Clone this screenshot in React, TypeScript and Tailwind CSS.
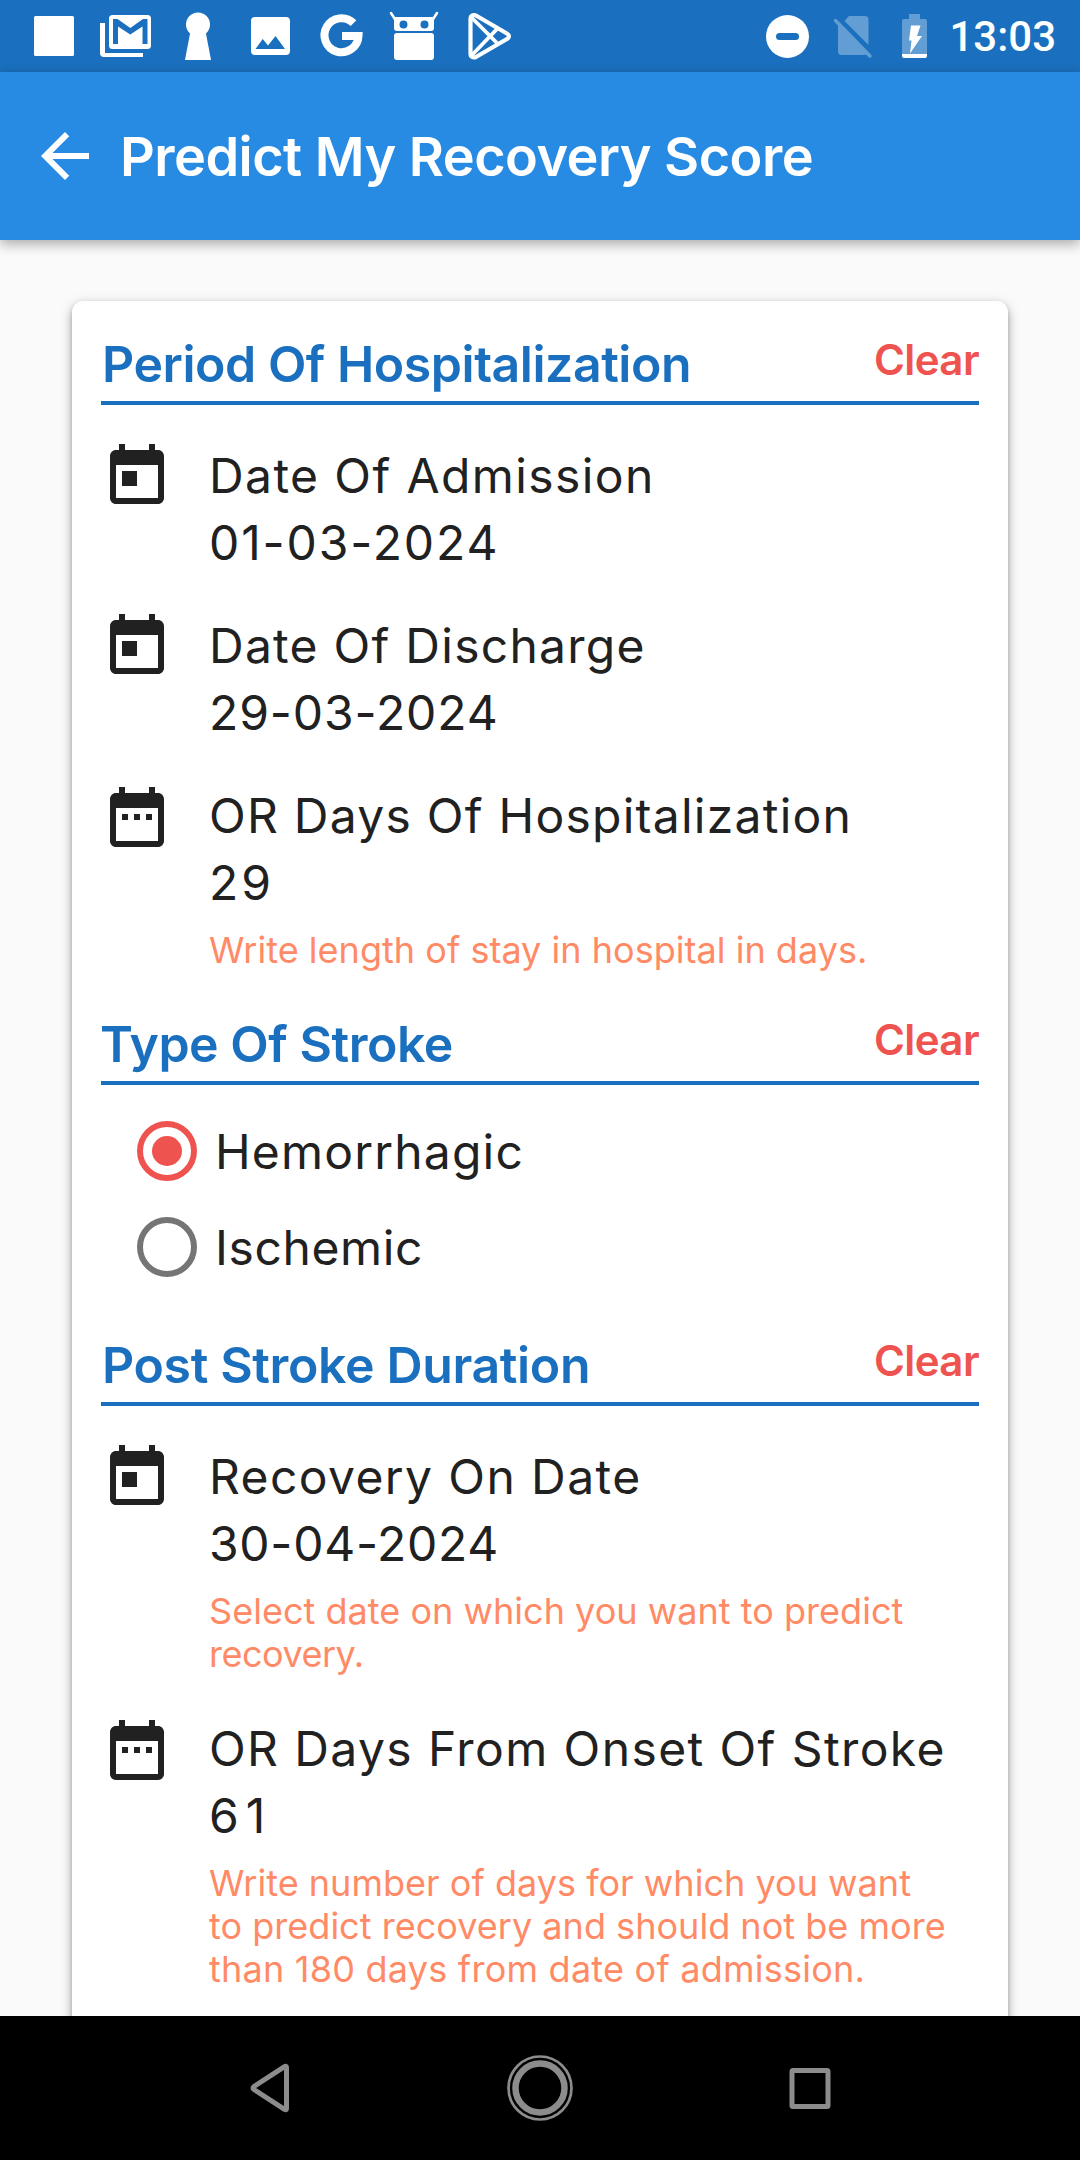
import type { ReactNode } from "react";

const TODAY =
  "M19 3h-1V1h-2v2H8V1H6v2H5c-1.11 0-1.99.9-1.99 2L3 19c0 1.1.89 2 2 2h14c1.1 0 2-.9 2-2V5c0-1.1-.9-2-2-2zm0 16H5V8h14v11zM7 10h5v5H7z";
const RANGE =
  "M9 11H7v2h2v-2zm4 0h-2v2h2v-2zm4 0h-2v2h2v-2zm2-7h-1V2h-2v2H8V2H6v2H5c-1.11 0-1.99.9-1.99 2L3 20c0 1.1.89 2 2 2h14c1.1 0 2-.9 2-2V6c0-1.1-.9-2-2-2zm0 16H5V9h14v11z";

function StatusBar() {
  return (
    <div className="flex h-[72px] shrink-0 items-center justify-between bg-[#1a70be] pl-[18px] text-white">
      <div className="flex">
        <svg className="h-[72px] w-[72px]" viewBox="18 0 72 72" fill="currentColor">
          <rect x="34" y="16" width="40" height="40" rx="1.5" />
        </svg>
        <svg className="h-[72px] w-[72px]" viewBox="90 0 72 72" fill="currentColor">
          <path d="M100 23h5v30h38v4h-39q-4 0-4-4z" />
          <path
            fillRule="evenodd"
            d="M112.500 15h35q3.500 0 3.500 3.500v27q0 3.500-3.500 3.500h-35q-3.500 0-3.500-3.500v-27q0-3.500 3.500-3.500zM113 19v25h5V26.500l12.300 8 12.200-8V44h5V19h-4.500l-12.700 9-12.800-9z"
          />
        </svg>
        <svg className="h-[72px] w-[72px]" viewBox="162 0 72 72" fill="currentColor">
          <circle cx="198" cy="24.500" r="12" />
          <path d="M190.500 31h15l5.500 29h-26z" />
        </svg>
        <svg className="h-[72px] w-[72px]" viewBox="234 0 72 72" fill="currentColor">
          <path
            fillRule="evenodd"
            d="M255 17h31q4 0 4 4v30q0 4-4 4h-31q-4 0-4-4V21q0-4 4-4zM255.500 49h29.500l-9.500-13-7.500 9.500-5.300-6.500z"
          />
        </svg>
        <svg className="h-[72px] w-[72px]" viewBox="306 0 72 72" fill="none" stroke="currentColor" strokeWidth="8">
          <path d="M353.500 23.200A17 17 0 1 0 358.500 36H342" />
        </svg>
        <svg className="h-[72px] w-[72px]" viewBox="378 0 72 72" fill="currentColor">
          <path
            fillRule="evenodd"
            d="M394 17h40v11q0 3-3 3h-34q-3 0-3-3zM403.500 20.500a4 4 0 1 0 0 8 4 4 0 0 0 0-8zM424.500 20.500a4 4 0 1 0 0 8 4 4 0 0 0 0-8z"
          />
          <path d="M391 13l4.500 7M437 13l-4.500 7" stroke="currentColor" strokeWidth="2.500" strokeLinecap="round" />
          <rect x="394" y="33" width="40" height="27" rx="3" />
        </svg>
        <svg
          className="h-[72px] w-[72px]"
          viewBox="450 0 72 72"
          fill="none"
          stroke="currentColor"
          strokeWidth="4.200"
          strokeLinejoin="round"
        >
          <path d="M470.500 18.500q0-4 5-3.200l31 18q5 3 0 6l-31 18q-5 .5-5-3z" />
          <path d="M471.500 17.500L498 44M471.500 55.500L498 28" strokeWidth="3.800" />
        </svg>
      </div>
      <div className="flex items-center pr-[24px]">
        <svg className="h-[72px] w-[72px]" viewBox="750 0 72 72">
          <circle cx="786.500" cy="36.500" r="21.500" fill="white" />
          <rect x="775" y="33" width="23" height="7" rx="3.500" fill="#1a70be" />
        </svg>
        <svg className="h-[72px] w-[60px]" viewBox="822 0 60 72">
          <path
            d="M848 16h16q3.500 0 3.500 3.500V45L843.500 21zM837 24.500L866 54q-1 1-3 1h-22.500q-3.500 0-3.500-3.500z"
            fill="#629dd4"
          />
          <path d="M834.500 20.500L869 56" stroke="#629dd4" strokeWidth="3.500" strokeLinecap="round" />
        </svg>
        <svg className="h-[72px] w-[60px]" viewBox="882 0 60 72">
          <path d="M908 14h11v5h5q2 0 2 2v33h-25V21q0-2 2-2h5z" fill="#629dd4" />
          <path d="M901 54h25v2q0 2-2 2h-21q-2 0-2-2z" fill="white" />
          <path d="M910 25.500h9.500l-3.500 10.500h5l-12 17.500 1.500-13h-2.500z" fill="white" />
        </svg>
        <span className="pl-[6px] pt-[2px] font-['Roboto'] text-[42px] font-medium leading-[70px]">13:03</span>
      </div>
    </div>
  );
}

function SectionHeader({ children }: { children: ReactNode }) {
  return (
    <div className="flex items-start justify-between border-b-4 border-[#1a70be] pb-[7px] leading-[60px]">
      <h2 className="pl-px text-[50px] font-semibold tracking-[-0.46px] text-[#1a70be]">{children}</h2>
      <button className="-mt-[4px] text-[42px] font-semibold leading-[60px] tracking-[-0.58px] text-[#ef5350]">
        Clear
      </button>
    </div>
  );
}

function Field({ icon, label, value, hint }: { icon: string; label: ReactNode; value: ReactNode; hint?: ReactNode }) {
  return (
    <div className="flex gap-[36px]">
      <svg className="-mt-px h-[72px] w-[72px] shrink-0 fill-[#212121]" viewBox="0 0 24 24">
        <path d={icon} />
      </svg>
      <div className="whitespace-nowrap text-[48px] leading-[67px] text-[#212121]">
        <div className="tracking-[1.4px]">{label}</div>
        <div>{value}</div>
        {hint && (
          <div className="-mb-[2px] mt-[13px] text-[36px] leading-[43px] tracking-[0.03px] text-[#ff8a65]">{hint}</div>
        )}
      </div>
    </div>
  );
}

function Radio({ checked, children }: { checked?: boolean; children: ReactNode }) {
  return (
    <div className="flex h-[96px] items-center gap-[18px] pl-[36px] text-[48px] text-[#212121]">
      <span
        className={
          checked
            ? "flex h-[60px] w-[60px] items-center justify-center rounded-full border-[6px] border-[#ef5350]"
            : "h-[60px] w-[60px] rounded-full border-[6px] border-[#757575]"
        }
      >
        {checked && <span className="h-[30px] w-[30px] rounded-full bg-[#ef5350]" />}
      </span>
      <span className="pt-[2px]">{children}</span>
    </div>
  );
}

export default function App() {
  return (
    <div className="flex h-[2160px] w-[1080px] flex-col overflow-hidden bg-[#fafafa] font-['Inter',sans-serif] [font-feature-settings:'calt'_0]">
      <StatusBar />
      <header className="z-10 flex h-[168px] shrink-0 items-center bg-[#278ae3] pl-[29px] text-white shadow-[0_4px_12px_rgba(0,0,0,0.33)]">
        <svg className="h-[72px] w-[72px] fill-current" viewBox="0 0 24 24">
          <path d="M20 11H7.83l5.590-5.590L12 4l-8 8 8 8 1.410-1.410L7.830 13H20v-2z" />
        </svg>
        <h1 className="pl-[19px] pt-[2px] text-[54px] font-semibold leading-[72px] tracking-[-0.53px]">
          Predict My Recovery Score
        </h1>
      </header>
      <main className="min-h-0 flex-1 overflow-hidden px-[72px] pt-[61px]">
        <section className="h-[1800px] rounded-[11px] bg-white px-[29px] pt-[33px] shadow-[0_2px_4px_rgba(0,0,0,0.14),0_5px_10px_rgba(0,0,0,0.2),0_3px_14px_rgba(0,0,0,0.16)]">
          <SectionHeader>Period Of Hospitalization</SectionHeader>
          <div className="mt-[37px] flex flex-col gap-[36px]">
            <Field icon={TODAY} label="Date Of Admission" value={<span className="tracking-[1.9px]">01-03-2024</span>} />
            <Field
              icon={TODAY}
              label={<span className="tracking-[1.26px]">Date Of Discharge</span>}
              value={<span className="tracking-[0.9px]">29-03-2024</span>}
            />
            <Field
              icon={RANGE}
              label={<span className="tracking-[1.25px]">OR Days Of Hospitalization</span>}
              value={<span className="tracking-[3px]">29</span>}
              hint="Write length of stay in hospital in days."
            />
          </div>
          <div className="mt-[44px]">
            <SectionHeader>
              <span className="-ml-[2px]">Type Of Stroke</span>
            </SectionHeader>
          </div>
          <div className="mt-[18px]">
            <Radio checked>
              <span className="tracking-[1.19px]">Hemorrhagic</span>
            </Radio>
            <Radio>
              <span className="tracking-[0.6px]">Ischemic</span>
            </Radio>
          </div>
          <div className="mt-[40px]">
            <SectionHeader>
              <span className="tracking-[-0.37px]">Post Stroke Duration</span>
            </SectionHeader>
          </div>
          <div className="mt-[37px] flex flex-col gap-[41px]">
            <Field
              icon={TODAY}
              label="Recovery On Date"
              value={<span className="tracking-[0.72px]">30-04-2024</span>}
              hint={
                <>
                  Select date on which you want to predict
                  <br />
                  <span className="tracking-[-0.5px]">recovery.</span>
                </>
              }
            />
            <Field
              icon={RANGE}
              label="OR Days From Onset Of Stroke"
              value={<span className="tracking-[7px]">61</span>}
              hint={
                <>
                  Write number of days for which you want
                  <br />
                  to predict recovery and should not be more
                  <br />
                  <span className="tracking-[0.24px]">than 180 days from date of admission.</span>
                </>
              }
            />
          </div>
        </section>
      </main>
      <nav className="z-10 flex h-[144px] shrink-0 items-center justify-center bg-black">
        <svg className="h-[144px] w-[270px]" viewBox="135 0 270 144" fill="none" stroke="#8c8c8c" strokeWidth="5">
          <path d="M286.500 51.500v41q0 2-2 .8l-30.500-19.800q-2-1.500 0-3l30.500-19.800q2-1.200 2 .8z" />
        </svg>
        <svg className="h-[144px] w-[270px]" viewBox="405 0 270 144" fill="none" stroke="#8c8c8c">
          <circle cx="540" cy="72" r="31.500" strokeWidth="2.700" />
          <circle cx="540" cy="72" r="24.500" strokeWidth="6.500" />
        </svg>
        <svg className="h-[144px] w-[270px]" viewBox="675 0 270 144" fill="none" stroke="#8c8c8c" strokeWidth="5">
          <rect x="792" y="54.500" width="36" height="36" rx="1" />
        </svg>
      </nav>
    </div>
  );
}
